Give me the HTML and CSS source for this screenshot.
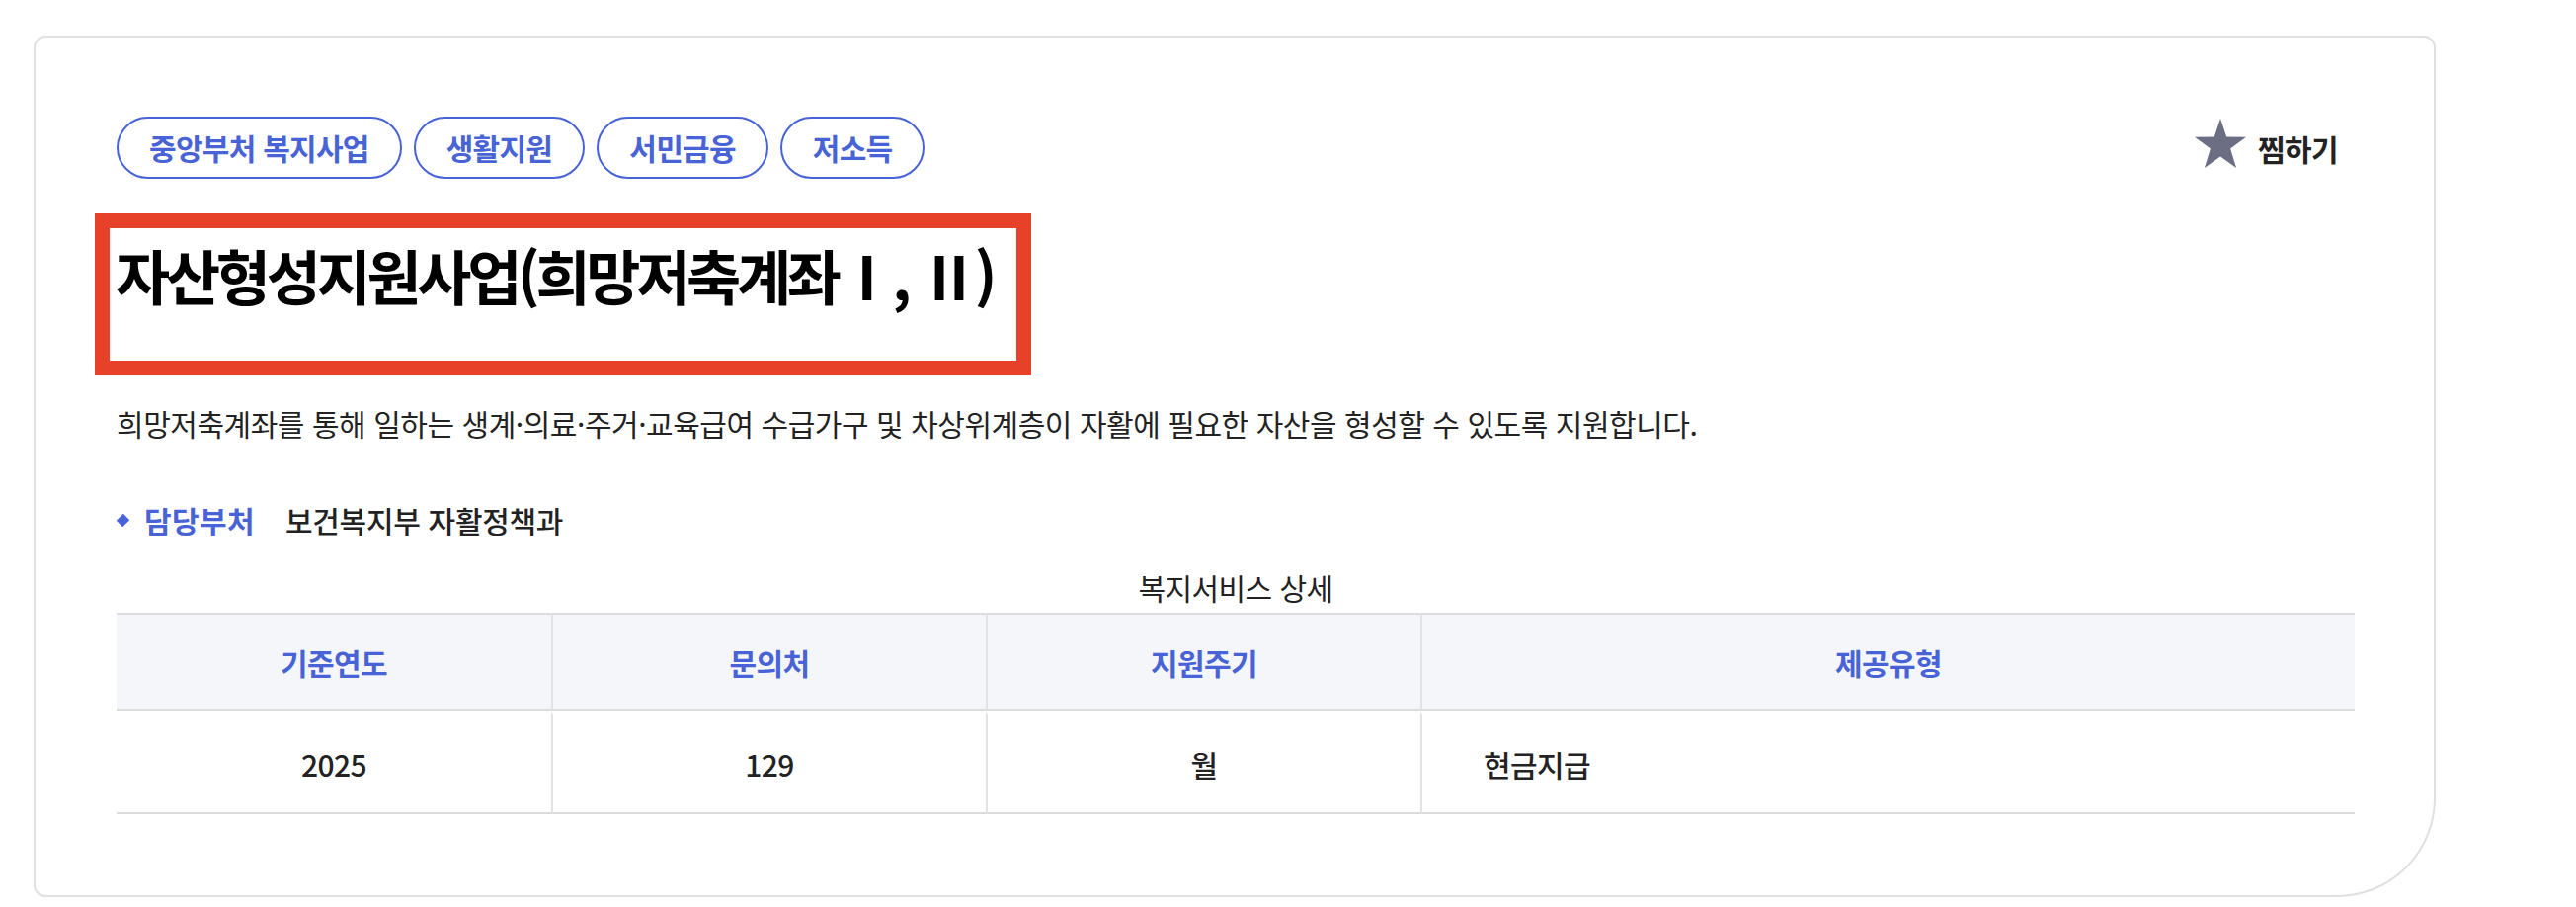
FILE: index.html
```html
<!DOCTYPE html>
<html lang="ko">
<head>
<meta charset="utf-8">
<title>자산형성지원사업</title>
<link rel="stylesheet" href="styles.css">
</head>
<body>
<div class="page">
  <section class="card">
    <div class="top">
      <ul class="tags">
        <li class="tag">중앙부처 복지사업</li>
        <li class="tag">생활지원</li>
        <li class="tag">서민금융</li>
        <li class="tag">저소득</li>
      </ul>
      <button class="fav" type="button">
        <svg class="star" viewBox="0 0 52 52" aria-hidden="true"><polygon points="26,0 32.2,18.6 52,18.8 36.1,30.6 42.1,50 26,38.4 9.9,50 15.9,30.6 0,18.8 19.8,18.6"/></svg>
        <span>찜하기</span>
      </button>
    </div>
    <h2 class="title">자산형성지원사업(희망저축계좌Ⅰ, Ⅱ)</h2>
    <p class="desc">희망저축계좌를 통해 일하는 생계·의료·주거·교육급여 수급가구 및 차상위계층이 자활에 필요한 자산을 형성할 수 있도록 지원합니다.</p>
    <dl class="dept">
      <dt>담당부처</dt>
      <dd>보건복지부 자활정책과</dd>
    </dl>
    <table class="info">
      <caption>복지서비스 상세</caption>
      <colgroup>
        <col class="c-narrow"><col class="c-narrow"><col class="c-narrow"><col>
      </colgroup>
      <thead>
        <tr><th>기준연도</th><th>문의처</th><th>지원주기</th><th>제공유형</th></tr>
      </thead>
      <tbody>
        <tr><td>2025</td><td>129</td><td>월</td><td class="left">현금지급</td></tr>
      </tbody>
    </table>
  </section>
</div>
</body>
</html>
```
FILE: styles.css
```css
* { box-sizing: border-box; }
html, body { margin: 0; padding: 0; background: #fff; }
body {
  font-family: "Noto Sans CJK KR", "Noto Sans", sans-serif;
  color: #222;
  letter-spacing: -0.56px;
}
.page { padding: 36px 0 0 34px; }
.card {
  width: 2432px;
  border: 2px solid #e0e0e0;
  border-radius: 12px 12px 100px 12px;
  padding: 80px 80px 82px 82px;
  background: #fff;
}
.top {
  display: flex;
  align-items: center;
  justify-content: space-between;
}
.tags {
  display: flex;
  gap: 12px;
  list-style: none;
  margin: 0;
  padding: 0;
}
.tag {
  height: 63px;
  line-height: 59px;
  padding: 0 31px;
  border: 2px solid #4863d6;
  border-radius: 32px;
  color: #4863d6;
  font-size: 30px;
  font-weight: 600;
  letter-spacing: -0.72px;
}
.fav {
  display: flex;
  align-items: center;
  gap: 12px;
  margin: 0 17px 0 0;
  padding: 0;
  border: 0;
  background: none;
  font-family: inherit;
  letter-spacing: -0.64px;
  font-size: 30px;
  font-weight: 700;
  color: #222;
  line-height: 40px;
}
.star { width: 52px; height: 52px; fill: #6c6f84; margin-top: -8px; }
.title {
  display: inline-block;
  margin: 35px 0 0 -22px;
  padding: 8px 24px 48px 6px;
  border: 15px solid #e8412a;
  font-size: 60px;
  font-weight: 700;
  line-height: 78px;
  letter-spacing: -4.32px;
  color: #000;
}
.desc {
  margin: 26px 0 0;
  font-size: 30px;
  line-height: 45px;
  letter-spacing: -0.46px;
  color: #222;
}
.dept {
  display: flex;
  align-items: center;
  margin: 53px 0 0;
  font-size: 30px;
  line-height: 45px;
  letter-spacing: 0;
}
.dept dt {
  display: flex;
  align-items: center;
  gap: 17px;
  color: #4863d6;
  font-weight: 600;
  letter-spacing: 0.4px;
}
.dept dt::before {
  content: "";
  width: 9px;
  height: 9px;
  background: #4863d6;
  transform: rotate(45deg) scaleY(1.1);
  margin-left: 2px;
}
.dept dd { margin: 0 0 0 31px; font-weight: 500; color: #222; letter-spacing: -0.3px; }
.info {
  width: 100%;
  margin-top: 23px;
  border-collapse: separate;
  border-spacing: 0;
  font-size: 30px;
  table-layout: fixed;
}
.info caption {
  font-size: 30px;
  line-height: 45px;
  padding-bottom: 3px;
  color: #222;
}
.c-narrow { width: 440px; }
.info th {
  height: 100px;
  background: #f5f6fa;
  border-top: 2px solid #dcdcdc;
  border-bottom: 2px solid #dcdcdc;
  color: #4863d6;
  font-weight: 600;
  text-align: center;
  padding: 0;
}
.info th + th { border-left: 2px solid #e3e3e3; }
.info td {
  height: 104px;
  border-top: 4px solid #fff;
  border-bottom: 2px solid #dcdcdc;
  text-align: center;
  font-weight: 500;
  color: #222;
  padding: 0;
}
.info td + td { border-left: 2px solid #e3e3e3; }
.info td.left { text-align: left; padding-left: 62px; }
```
